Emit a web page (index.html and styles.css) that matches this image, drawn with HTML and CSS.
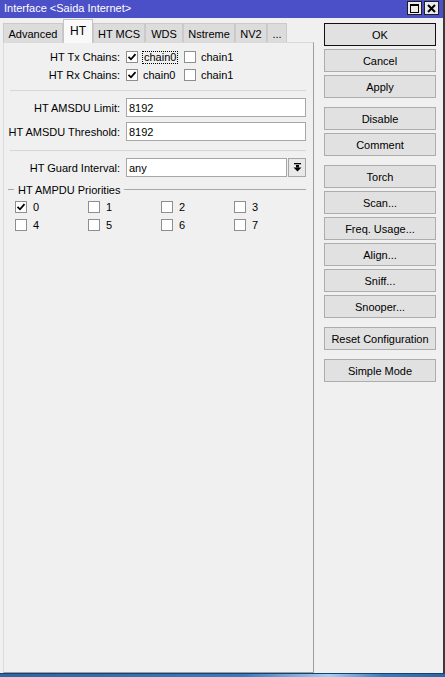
FILE: index.html
```html
<!DOCTYPE html>
<html>
<head>
<meta charset="utf-8">
<link rel="stylesheet" href="styles.css">
</head>
<body>
<div class="screen">
  <div class="window">
    <div class="titlebar">
      <div class="title">Interface &lt;Saida Internet&gt;</div>
      <div class="tbtn"><svg width="9" height="9" viewBox="0 0 9 9"><rect x="0.5" y="0.5" width="8" height="8" fill="none" stroke="#000" stroke-width="1"/><rect x="0" y="0" width="9" height="2" fill="#000"/></svg></div>
      <div class="tbtn"><svg width="9" height="9" viewBox="0 0 9 9"><path d="M1 1 L8 8 M8 1 L1 8" stroke="#000" stroke-width="2"/></svg></div>
    </div>
    <div class="main">
      <div class="left">
        <div class="tabs">
          <div class="tab w-adv">Advanced</div>
          <div class="tab sel w-ht">HT</div>
          <div class="tab w-mcs">HT MCS</div>
          <div class="tab w-wds">WDS</div>
          <div class="tab w-nst">Nstreme</div>
          <div class="tab w-nv2">NV2</div>
          <div class="tab w-more">...</div>
        </div>
        <div class="panel">
          <div class="row chainrow">
            <div class="lbl">HT Tx Chains:</div>
            <div class="chains">
              <div class="chain"><span class="cb"><svg width="10" height="10" viewBox="0 0 10 10"><path d="M1.5 4.8 L4 7.3 L8.5 2.2" fill="none" stroke="#000" stroke-width="1.8"/></svg></span><span class="focus">chain0</span></div>
              <div class="chain"><span class="cb"></span><span class="ctext">chain1</span></div>
            </div>
          </div>
          <div class="row chainrow">
            <div class="lbl">HT Rx Chains:</div>
            <div class="chains">
              <div class="chain"><span class="cb"><svg width="10" height="10" viewBox="0 0 10 10"><path d="M1.5 4.8 L4 7.3 L8.5 2.2" fill="none" stroke="#000" stroke-width="1.8"/></svg></span><span class="ctext">chain0</span></div>
              <div class="chain"><span class="cb"></span><span class="ctext">chain1</span></div>
            </div>
          </div>
          <div class="sep sep1"></div>
          <div class="row fieldrow">
            <div class="lbl">HT AMSDU Limit:</div>
            <div class="input">8192</div>
          </div>
          <div class="row fieldrow second">
            <div class="lbl">HT AMSDU Threshold:</div>
            <div class="input">8192</div>
          </div>
          <div class="sep sep2"></div>
          <div class="row fieldrow">
            <div class="lbl">HT Guard Interval:</div>
            <div class="combo">
              <div class="input grow">any</div>
              <div class="drop"><svg width="9" height="9" viewBox="0 0 9 9"><rect x="1" y="0" width="7" height="1.3" fill="#000"/><rect x="3" y="2" width="3" height="2.5" fill="#000"/><polygon points="0.5,4.5 8.5,4.5 4.5,8.5" fill="#000"/></svg></div>
            </div>
          </div>
          <div class="group"><span class="gtext">HT AMPDU Priorities</span></div>
          <div class="prio">
            <div class="pitem"><span class="cb"><svg width="10" height="10" viewBox="0 0 10 10"><path d="M1.5 4.8 L4 7.3 L8.5 2.2" fill="none" stroke="#000" stroke-width="1.8"/></svg></span><span>0</span></div>
            <div class="pitem"><span class="cb"></span><span>1</span></div>
            <div class="pitem"><span class="cb"></span><span>2</span></div>
            <div class="pitem"><span class="cb"></span><span>3</span></div>
            <div class="pitem"><span class="cb"></span><span>4</span></div>
            <div class="pitem"><span class="cb"></span><span>5</span></div>
            <div class="pitem"><span class="cb"></span><span>6</span></div>
            <div class="pitem"><span class="cb"></span><span>7</span></div>
          </div>
        </div>
      </div>
      <div class="right">
        <div class="bgroup">
          <div class="btn default">OK</div>
          <div class="btn">Cancel</div>
          <div class="btn">Apply</div>
        </div>
        <div class="bgroup">
          <div class="btn">Disable</div>
          <div class="btn">Comment</div>
        </div>
        <div class="bgroup">
          <div class="btn">Torch</div>
          <div class="btn">Scan...</div>
          <div class="btn">Freq. Usage...</div>
          <div class="btn">Align...</div>
          <div class="btn">Sniff...</div>
          <div class="btn">Snooper...</div>
        </div>
        <div class="bgroup">
          <div class="btn">Reset Configuration</div>
        </div>
        <div class="bgroup">
          <div class="btn">Simple Mode</div>
        </div>
      </div>
    </div>
  </div>
  <div class="taskbar"></div>
</div>
</body>
</html>
```

FILE: styles.css
```css
* { box-sizing: border-box; }
html, body { margin: 0; padding: 0; }
body {
  width: 445px;
  height: 677px;
  overflow: hidden;
  background: #f0f0f0;
  font-family: "Liberation Sans", Arial, sans-serif;
  font-size: 11px;
  color: #000;
}
.screen { display: flex; flex-direction: column; height: 677px; }
.window {
  width: 445px;
  height: 673px;
  display: flex;
  flex-direction: column;
  background: #f0f0f0;
  border-right: 2px solid #3a3a3a;
}
.titlebar {
  height: 18px;
  flex: none;
  background: #4b50c8;
  color: #fff;
  display: flex;
  align-items: flex-start;
  padding: 1px 4px 0 4px;
}
.title { flex: 1; line-height: 15px; font-size: 11px; }
.tbtn {
  width: 15px;
  height: 14px;
  margin-left: 2px;
  background: #ebebeb;
  border: 1px solid #1e1e1e;
  display: flex;
  align-items: center;
  justify-content: center;
}
.main { flex: 1; display: flex; min-height: 0; }
.left { width: 314px; padding-left: 3px; display: flex; flex-direction: column; }
.tabs { height: 24px; flex: none; display: flex; align-items: flex-end; }
.tab {
  height: 19px;
  border: 1px solid #cacaca;
  border-bottom: none;
  background: #dcdcdc;
  display: flex;
  align-items: center;
  justify-content: center;
  padding-top: 1px;
}
.tab.sel {
  height: 24px;
  margin-bottom: -1px;
  background: #f9f9f9;
  border-color: #c4c4c4;
  position: relative;
  z-index: 1;
  font-size: 12px;
  padding-bottom: 2px;
}
.w-adv { width: 60px; }
.w-ht { width: 30px; }
.w-mcs { width: 52px; }
.w-wds { width: 38px; }
.w-nst { width: 52px; }
.w-nv2 { width: 32px; }
.w-more { width: 20px; }
.panel {
  flex: 1;
  border-top: 1px solid #d9d9d9;
  border-left: 1px solid #dcdcdc;
  border-right: 1px solid #a0a0a0;
  border-bottom: 1px solid #a0a0a0;
  padding: 5px 7px 0 0;
}
.row {
  display: grid;
  grid-template-columns: 116px 1fr;
  column-gap: 6px;
  align-items: center;
}
.lbl { text-align: right; white-space: nowrap; }
.chainrow { height: 18px; }
.chains { display: flex; }
.chain { width: 58px; display: flex; align-items: center; }
.cb {
  width: 12px;
  height: 12px;
  flex: none;
  border: 1px solid #8e8e8e;
  background: #fff;
  display: flex;
  align-items: center;
  justify-content: center;
}
.focus {
  margin-left: 4px;
  padding: 0 1px;
  border: 1px dotted #000;
  line-height: 11px;
}
.ctext { margin-left: 5px; }
.sep { height: 1px; background: #d6d6d6; margin-left: 6px; }
.sep1 { margin-top: 6px; margin-bottom: 7px; }
.sep2 { margin-top: 9px; margin-bottom: 7px; }
.fieldrow { height: 19px; }
.fieldrow.second { margin-top: 5px; }
.input {
  height: 19px;
  background: #fff;
  border: 1px solid #a6a6a6;
  padding-left: 2px;
  display: flex;
  align-items: center;
}
.combo { display: flex; height: 19px; }
.grow { flex: 1; }
.drop {
  width: 18px;
  height: 19px;
  margin-left: 1px;
  background: #e9e9e9;
  border: 1px solid #a6a6a6;
  display: flex;
  align-items: center;
  justify-content: center;
}
.group {
  margin-top: 6px;
  height: 13px;
  display: flex;
  align-items: center;
  padding-left: 4px;
}
.group::before {
  content: "";
  width: 6px;
  height: 1px;
  background: #a8a8a8;
}
.group::after {
  content: "";
  flex: 1;
  height: 1px;
  background: #a8a8a8;
}
.gtext { margin: 0 4px; white-space: nowrap; }
.prio {
  margin-top: 2px;
  padding-left: 11px;
  display: grid;
  grid-template-columns: repeat(4, 73px);
  grid-auto-rows: 18px;
}
.pitem { display: flex; align-items: center; gap: 6px; }
.right {
  flex: 1;
  padding: 5px 0 0 10px;
  display: flex;
  flex-direction: column;
  gap: 9px;
}
.bgroup { display: flex; flex-direction: column; gap: 3px; }
.btn {
  width: 112px;
  height: 23px;
  background: #e1e1e1;
  border: 1px solid #adadad;
  display: flex;
  align-items: center;
  justify-content: center;
  white-space: nowrap;
}
.btn.default { border-color: #111; }
.taskbar {
  height: 4px;
  flex: none;
  border-top: 1px solid #17406e;
  background: linear-gradient(to right, #2b66a6 0%, #3a7bc0 55%, #a6d0f2 74%, #3a7bc0 86%, #2b66a6 100%);
}
```
